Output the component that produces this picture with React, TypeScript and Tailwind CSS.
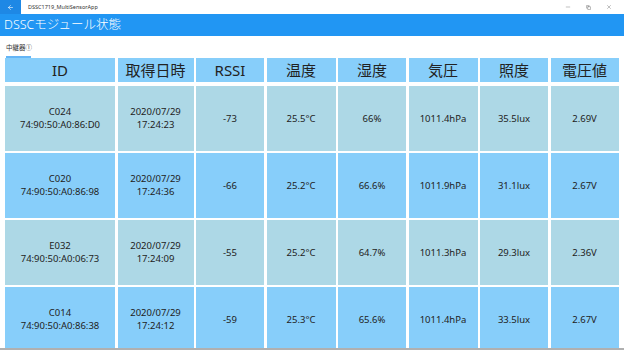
import { ArrowLeft, Minus, Copy, X } from 'lucide-react';

const headers = ['ID', '取得日時', 'RSSI', '温度', '湿度', '気圧', '照度', '電圧値'];

const rows = [
  { id: 'C024', mac: '74:90:50:A0:86:D0', date: '2020/07/29', time: '17:24:23', rssi: '-73', temp: '25.5°C', hum: '66%', pres: '1011.4hPa', lux: '35.5lux', volt: '2.69V' },
  { id: 'C020', mac: '74:90:50:A0:86:98', date: '2020/07/29', time: '17:24:36', rssi: '-66', temp: '25.2°C', hum: '66.6%', pres: '1011.9hPa', lux: '31.1lux', volt: '2.67V' },
  { id: 'E032', mac: '74:90:50:A0:06:73', date: '2020/07/29', time: '17:24:09', rssi: '-55', temp: '25.2°C', hum: '64.7%', pres: '1011.3hPa', lux: '29.3lux', volt: '2.36V' },
  { id: 'C014', mac: '74:90:50:A0:86:38', date: '2020/07/29', time: '17:24:12', rssi: '-59', temp: '25.3°C', hum: '65.6%', pres: '1011.4hPa', lux: '33.5lux', volt: '2.67V' },
];

const cols = 'grid grid-cols-[110px_76px_68px_69px_68px_69px_68px_68px] gap-x-[2.5px]';

const App = () => {
  return (
    <div
      className="relative w-[624px] h-[350px] overflow-hidden bg-white text-[#222]"
      style={{ fontFamily: '"Noto Sans", "Noto Sans CJK JP", sans-serif' }}
    >
      {/* Title bar */}
      <div className="flex items-center h-[14px] bg-white">
        <div className="w-[21px] h-full bg-[#1e88e5] flex items-center justify-center">
          <ArrowLeft className="w-[7px] h-[7px] text-white" strokeWidth={2} />
        </div>
        <span className="ml-[7px] text-[5.5px] text-[#333]">DSSC1719_MultiSensorApp</span>
        <div className="ml-auto flex items-center gap-[15px] pr-[12px] text-[#555]">
          <Minus className="w-[6px] h-[6px]" strokeWidth={1.5} />
          <Copy className="w-[5px] h-[5px]" strokeWidth={2} />
          <X className="w-[6px] h-[6px]" strokeWidth={1.5} />
        </div>
      </div>

      {/* Page header */}
      <div className="h-[22px] bg-[#2196f3] flex items-center pl-[4px]">
        <span className="text-white text-[12.5px] leading-none font-light">DSSCモジュール状態</span>
      </div>

      {/* Pivot */}
      <div className="h-[22px] pl-[6px] pt-[7px] flex flex-col items-start">
        <span className="text-[6.5px] leading-[8px] text-[#333] font-['Noto_Sans_CJK_JP',sans-serif]">中継器①</span>
        <span className="mt-[5px] h-[1.5px] w-[25px] bg-[#64b5f6]" />
      </div>

      {/* Table */}
      <div className="pl-[5px]">
        <div className={`${cols} h-[24px]`}>
          {headers.map((h) => (
            <div key={h} className="bg-[#87cefa] flex items-center justify-center text-[15px] leading-none">
              {h}
            </div>
          ))}
        </div>
        <div className="mt-[4px] flex flex-col gap-y-[2.5px]">
          {rows.map((r, i) => (
            <div
              key={r.id}
              className={`${cols} h-[64.5px] text-[9.5px] leading-[13.5px] text-center ${i % 2 === 0 ? '[&>div]:bg-[#add8e6]' : '[&>div]:bg-[#87cefa]'}`}
            >
              <div className="flex flex-col items-center justify-center">
                <span>{r.id}</span>
                <span>{r.mac}</span>
              </div>
              <div className="flex flex-col items-center justify-center">
                <span>{r.date}</span>
                <span>{r.time}</span>
              </div>
              <div className="flex items-center justify-center">{r.rssi}</div>
              <div className="flex items-center justify-center">{r.temp}</div>
              <div className="flex items-center justify-center">{r.hum}</div>
              <div className="flex items-center justify-center">{r.pres}</div>
              <div className="flex items-center justify-center">{r.lux}</div>
              <div className="flex items-center justify-center">{r.volt}</div>
            </div>
          ))}
        </div>
      </div>

      {/* bottom edge */}
      <div className="absolute left-0 right-0 bottom-0 h-[2px] bg-[#b0b0b0]" />
    </div>
  );
};

export default App;
